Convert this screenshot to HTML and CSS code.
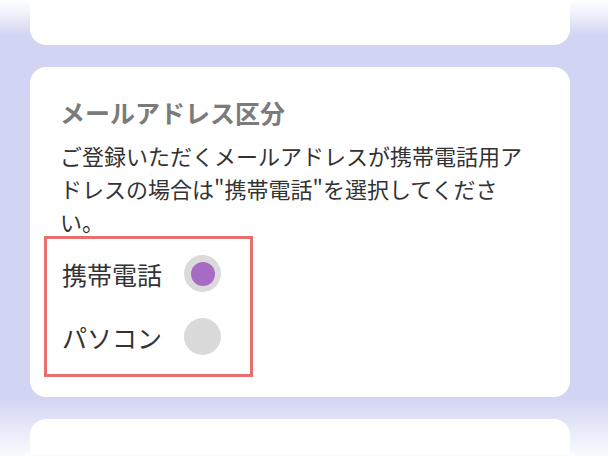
FILE: index.html
```html
<!DOCTYPE html>
<html lang="ja">
<head>
<meta charset="utf-8">
<title>メールアドレス区分</title>
<link rel="stylesheet" href="styles.css">
</head>
<body>
<main class="stack">
  <section class="card card-prev"></section>
  <section class="card card-main">
    <h2 class="title">メールアドレス区分</h2>
    <p class="desc">ご登録いただくメールアドレスが携帯電話用アドレスの場合は"携帯電話"を選択してください。</p>
    <div class="choices">
      <label class="choice">
        <span class="choice-label">携帯電話</span>
        <span class="radio checked"><span class="dot"></span></span>
      </label>
      <label class="choice">
        <span class="choice-label">パソコン</span>
        <span class="radio"></span>
      </label>
    </div>
  </section>
  <section class="card card-next"></section>
</main>
</body>
</html>
```

FILE: styles.css
```css
html, body {
  margin: 0;
  padding: 0;
}
body {
  background: #d1d5f3;
  font-family: "Noto Sans CJK JP", "Noto Sans", sans-serif;
  height: 456px;
  overflow: hidden;
}
body::before,
body::after {
  content: "";
  position: fixed;
  left: 0;
  right: 0;
  pointer-events: none;
}
body::before {
  top: 0;
  height: 36px;
  background: linear-gradient(to bottom, rgba(255,255,255,1) 0%, rgba(255,255,255,0.6) 45%, rgba(255,255,255,0) 100%);
}
body::after {
  bottom: 0;
  height: 58px;
  background: linear-gradient(to bottom, rgba(255,255,255,0) 0%, rgba(255,255,255,0.5) 55%, rgba(255,255,255,0.9) 100%);
}
.stack {
  display: flex;
  flex-direction: column;
  gap: 22px;
  padding: 0 38px 0 30px;
}
.card {
  background: #ffffff;
  border-radius: 16px;
}
.card-prev {
  height: 100px;
  margin-top: -55px;
}
.card-main {
  box-sizing: border-box;
  height: 330px;
  padding: 28px 30px 0 30px;
}
.card-next {
  height: 36px;
  border-radius: 16px 16px 0 0;
}
.title {
  margin: 0;
  font-size: 25px;
  line-height: 34px;
  font-weight: 700;
  color: #7b7b7b;
}
.desc {
  margin: 10px 0 0 0;
  font-size: 22px;
  line-height: 33px;
  color: #333333;
}
.choices {
  display: inline-flex;
  flex-direction: column;
  box-sizing: border-box;
  width: 209px;
  margin: -2px 0 0 -16px;
  padding: 3px 0 6px 15px;
  border: 3px solid #e96e6e;
}
.choice {
  display: flex;
  align-items: center;
  height: 63px;
  gap: 22px;
}
.choice-label {
  font-size: 25px;
  line-height: 30px;
  color: #333333;
  width: 100px;
  white-space: nowrap;
}
.radio {
  width: 37px;
  height: 37px;
  border-radius: 50%;
  background: #dadada;
  display: flex;
  align-items: center;
  justify-content: center;
}
.dot {
  width: 24px;
  height: 24px;
  border-radius: 50%;
  background: #a86bc3;
}
```
